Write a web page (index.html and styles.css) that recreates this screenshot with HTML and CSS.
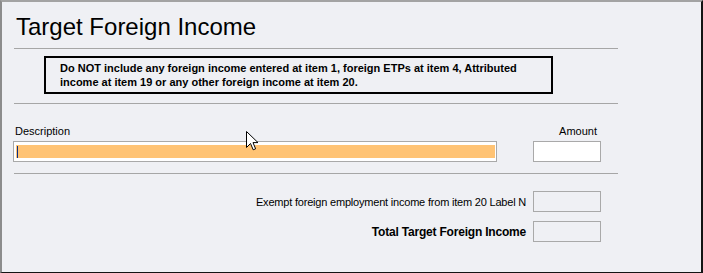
FILE: index.html
```html
<!DOCTYPE html>
<html>
<head>
<meta charset="utf-8">
<link rel="stylesheet" href="styles.css">
</head>
<body>
<div class="frame">
  <div class="content">
    <h1 class="title">Target Foreign Income</h1>
    <div class="rule"></div>
    <div class="notice">Do NOT include any foreign income entered at item 1, foreign ETPs at item 4, Attributed<br>income at item 19 or any other foreign income at item 20.</div>
    <div class="rule"></div>
    <div class="entry">
      <div class="col col-desc">
        <div class="label">Description</div>
        <div class="field field-desc"><div class="fill"><span class="caret"></span></div></div>
      </div>
      <div class="col col-amount">
        <div class="label label-right">Amount</div>
        <div class="field field-amount"></div>
      </div>
    </div>
    <div class="rule rule-low"></div>
    <div class="total-row first">
      <span class="row-label">Exempt foreign employment income from item 20 Label N</span>
      <div class="field field-ro"></div>
    </div>
    <div class="total-row second">
      <span class="row-label strong">Total Target Foreign Income</span>
      <div class="field field-ro"></div>
    </div>
  </div>
  <svg class="cursor" width="13" height="20" viewBox="0 0 13 20">
    <path d="M0.5 0.5 L0.5 16.5 L4.5 12.5 L7.2 18.8 L9.6 17.8 L7 11.6 L12 11.6 Z" fill="#fff" stroke="#000" stroke-width="1" stroke-linejoin="miter"/>
  </svg>
</div>
</body>
</html>
```

FILE: styles.css
```css
html, body {
  margin: 0;
  padding: 0;
  background: #eff0f4;
}

.frame {
  position: relative;
  width: 703px;
  height: 273px;
  box-sizing: border-box;
  border-top: 2px solid #a3a3a3;
  border-left: 2px solid #8c8c8c;
  border-right: 2px solid #141414;
  border-bottom: 1px solid #141414;
  background: #eff0f4;
  padding-top: 13px;
  font-family: "Liberation Sans", Arial, sans-serif;
  color: #000;
}

.content {
  margin-left: 11px;
  width: 605px;
}

.title {
  margin: 0;
  padding-left: 3px;
  font-size: 24px;
  font-weight: normal;
  line-height: 24px;
  color: #000;
}

.rule {
  margin-top: 9px;
  margin-left: 1px;
  width: 604px;
  height: 1px;
  background: #a6a6a6;
}

.rule-low {
  margin-top: 11px;
}

.notice {
  margin-top: 7px;
  margin-left: 31px;
  width: 509px;
  height: 38px;
  box-sizing: border-box;
  border: 2px solid #000;
  padding: 3px 0 3px 14px;
  font-size: 11px;
  font-weight: bold;
  line-height: 14px;
  white-space: nowrap;
  color: #000;
}

.entry {
  display: flex;
  margin-top: 21px;
}

.col-desc {
  width: 484px;
}

.col-amount {
  width: 68px;
  margin-left: 36px;
}

.label {
  font-size: 11px;
  line-height: 13px;
  height: 13px;
  padding-left: 2px;
  color: #000;
}

.label-right {
  text-align: right;
  padding-left: 0;
  padding-right: 4px;
}

.field {
  box-sizing: border-box;
  height: 21px;
  border: 1px solid #a9a9a9;
}

.col .field {
  margin-top: 3px;
}

.field-desc {
  background: #fff;
  padding: 3px 1px 3px 2px;
}

.fill {
  height: 13px;
  background: #ffc374;
  display: flex;
}

.caret {
  width: 1px;
  height: 12px;
  margin-top: 1px;
  margin-left: 1px;
  background: #0b2f86;
}

.field-amount {
  background: #fff;
}

.field-ro {
  width: 68px;
  background: #eff0f4;
}

.total-row {
  display: flex;
  justify-content: flex-end;
  align-items: center;
  gap: 7px;
  padding-right: 17px;
}

.total-row.first {
  margin-top: 17px;
}

.total-row.second {
  margin-top: 9px;
}

.row-label {
  font-size: 11px;
  line-height: 14px;
  letter-spacing: -0.2px;
  color: #000;
}

.row-label.strong {
  font-size: 12px;
  font-weight: bold;
  letter-spacing: -0.2px;
}

.cursor {
  position: absolute;
  left: 244px;
  top: 129px;
}
```
